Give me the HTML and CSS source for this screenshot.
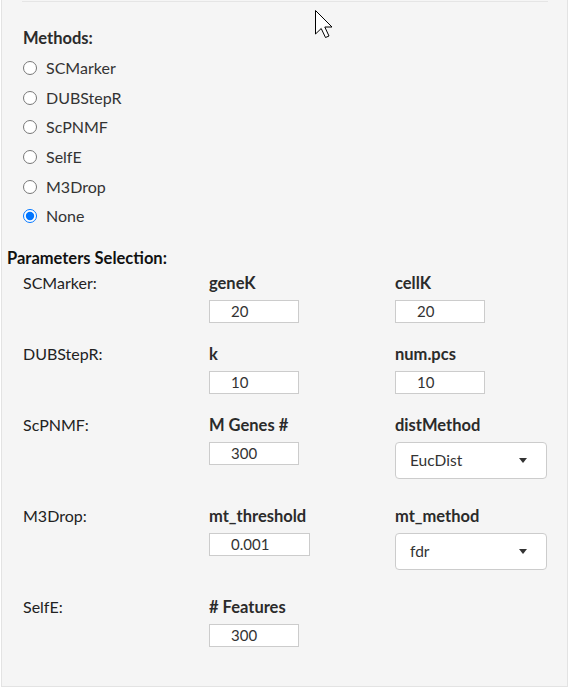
FILE: index.html
```html
<!DOCTYPE html>
<html lang="en">
<head>
<meta charset="utf-8">
<title>Methods</title>
<link rel="stylesheet" href="styles.css">
</head>
<body>
<div class="panel">
  <hr class="rule">
  <div class="group-label">Methods:</div>
  <div class="radio-list">
    <label class="radio"><input type="radio" name="method"><span>SCMarker</span></label>
    <label class="radio"><input type="radio" name="method"><span>DUBStepR</span></label>
    <label class="radio"><input type="radio" name="method"><span>ScPNMF</span></label>
    <label class="radio"><input type="radio" name="method"><span>SelfE</span></label>
    <label class="radio"><input type="radio" name="method"><span>M3Drop</span></label>
    <label class="radio"><input type="radio" name="method" checked><span>None</span></label>
  </div>
  <div class="params-title">Parameters Selection:</div>
  <div class="param-list">
    <div class="param-row">
      <div class="method-name">SCMarker:</div>
      <div class="field"><div class="field-label">geneK</div><input class="num" type="text" value="20"></div>
      <div class="field"><div class="field-label">cellK</div><input class="num" type="text" value="20"></div>
    </div>
    <div class="param-row">
      <div class="method-name">DUBStepR:</div>
      <div class="field"><div class="field-label">k</div><input class="num" type="text" value="10"></div>
      <div class="field"><div class="field-label">num.pcs</div><input class="num" type="text" value="10"></div>
    </div>
    <div class="param-row">
      <div class="method-name">ScPNMF:</div>
      <div class="field"><div class="field-label">M Genes #</div><input class="num" type="text" value="300"></div>
      <div class="field"><div class="field-label">distMethod</div><div class="select"><span>EucDist</span><span class="caret"></span></div></div>
    </div>
    <div class="param-row">
      <div class="method-name">M3Drop:</div>
      <div class="field"><div class="field-label">mt_threshold</div><input class="num wide" type="text" value="0.001"></div>
      <div class="field"><div class="field-label">mt_method</div><div class="select"><span>fdr</span><span class="caret"></span></div></div>
    </div>
    <div class="param-row">
      <div class="method-name">SelfE:</div>
      <div class="field"><div class="field-label"># Features</div><input class="num" type="text" value="300"></div>
      <div class="field"></div>
    </div>
  </div>
</div>
<svg class="cursor" width="19" height="30" viewBox="0 0 19 30" aria-hidden="true">
  <polygon points="0.5,0.5 0.5,24 6.2,18.5 10.5,27.5 14,26 9.8,17 17,17" fill="#fff" stroke="#000" stroke-width="1" stroke-linejoin="miter"/>
</svg>
</body>
</html>
```

FILE: styles.css
```css
body {
  margin: 0;
  background: #ffffff;
  font-family: Lato, "Liberation Sans", sans-serif;
  font-size: 16px;
  color: #333333;
}

.panel {
  margin-left: 1px;
  width: 567px;
  height: 687px;
  box-sizing: border-box;
  background: #f5f5f5;
  border: 1px solid #e3e3e3;
  border-top: none;
  padding: 1px 19px 0 20px;
}

.rule {
  margin: 0;
  border: 0;
  border-top: 1px solid #e5e5e5;
  height: 0;
}

.group-label {
  margin: 26px 0 0 1px;
  font-weight: 700;
  font-size: 16.5px;
  line-height: 20px;
  color: #2b2b2b;
}

.radio-list {
  margin: 5.5px 0 0 1px;
  display: flex;
  flex-direction: column;
}

.radio {
  display: flex;
  align-items: center;
  gap: 9px;
  height: 29.6px;
  line-height: 20px;
}

.radio input {
  width: 14px;
  height: 14px;
  margin: 0;
}

.params-title {
  margin: 17px 0 0 -15px;
  font-weight: 700;
  font-size: 16.5px;
  line-height: 20px;
  color: #111111;
}

.param-list {
  margin: 4.5px 0 0 1px;
  display: flex;
  flex-direction: column;
  gap: 21px;
}

.param-row {
  display: grid;
  grid-template-columns: 186px 186px 186px;
}

.method-name {
  line-height: 20px;
  color: #222222;
}

.field-label {
  font-weight: 700;
  font-size: 16.5px;
  line-height: 20px;
  color: #2b2b2b;
}

.num {
  display: block;
  margin: 7px 0 0 0;
  width: 90px;
  height: 23px;
  box-sizing: border-box;
  border: 1px solid #cccccc;
  border-radius: 0;
  background: #ffffff;
  padding: 0 0 0 21px;
  font-family: Lato, "Liberation Sans", sans-serif;
  font-size: 15px;
  color: #333333;
  outline: none;
}

.num.wide {
  width: 101px;
}

.select {
  margin: 7px 0 6px 0;
  width: 152px;
  height: 37px;
  box-sizing: border-box;
  border: 1px solid #cccccc;
  border-radius: 4px;
  background: #ffffff;
  display: flex;
  align-items: center;
  justify-content: space-between;
  padding: 0 19px 0 14px;
  font-size: 15.5px;
}

.caret {
  width: 0;
  height: 0;
  border-left: 4.5px solid transparent;
  border-right: 4.5px solid transparent;
  border-top: 5px solid #333333;
}

.cursor {
  position: absolute;
  left: 315px;
  top: 10px;
}
```
